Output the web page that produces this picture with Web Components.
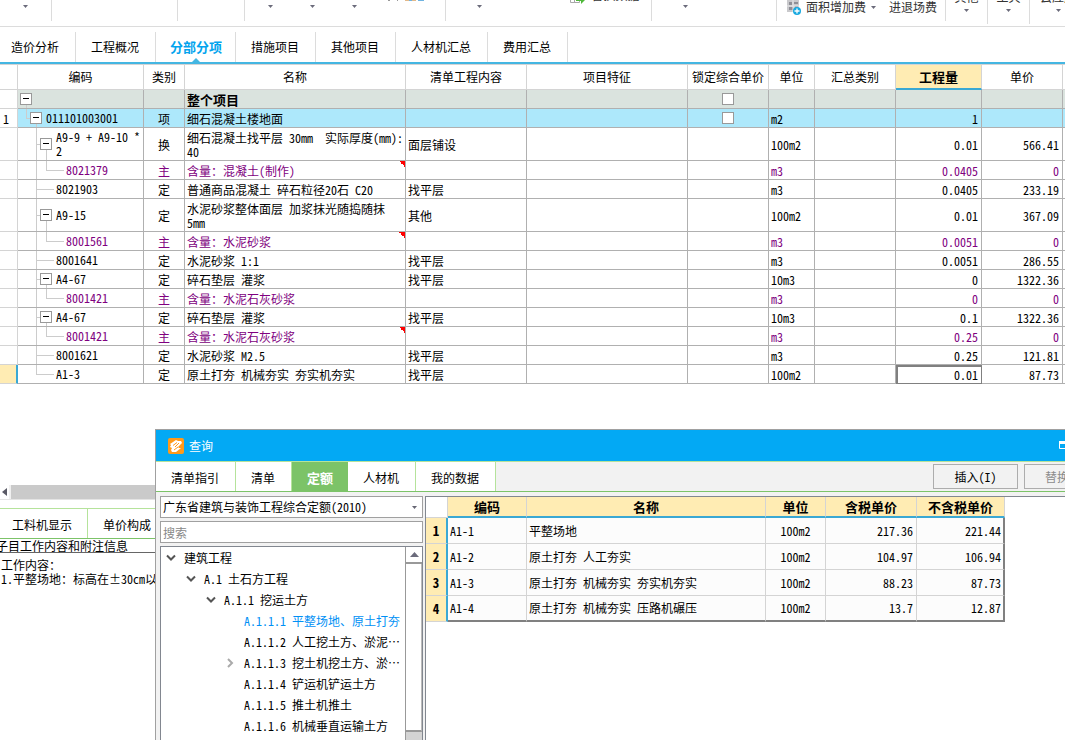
<!DOCTYPE html>
<html lang="zh-CN">
<head>
<meta charset="utf-8">
<title>分部分项 - 查询</title>
<style>
html, body { margin: 0; height: 100%; overflow: hidden; background: #fff; }
body {
  font-family: "Noto Sans CJK SC", "Liberation Sans", sans-serif;
  font-feature-settings: "hwid";
  font-size: 12px; line-height: 14px; color: #000;
  --grid: #b0b0b0; --soft: #d4d4d4; --sky: #44b6e2; --bar: #3aa8d4;
  --sand: #ffecb3; --leaf: #7cc368; --leaf-soft: #b5e39b;
}
</style>
</head>
<body>
<cost-app></cost-app>
<script>
const RESET = `
*, *::before, *::after { box-sizing: border-box; }
button, input, select { font: inherit; font-feature-settings: inherit; color: inherit; margin: 0; padding: 0; border: 0; background: none; border-radius: 0; appearance: none; outline: 0; }
`;
function define(name, html, setup) {
  const tpl = document.createElement('template');
  tpl.innerHTML = html.replace('<style>', '<style>' + RESET);
  customElements.define(name, class extends HTMLElement {
    constructor() {
      super();
      this.attachShadow({ mode: 'open' }).append(tpl.content.cloneNode(true));
    }
    connectedCallback() { if (setup) setup(this, this.shadowRoot); }
  });
}
const CARET = '<svg width="5" height="3" viewBox="0 0 5 3" aria-hidden="true"><path d="M0 0h5L2.5 3z" fill="#6b6b7b"/></svg>';

define('ribbon-group', `<style>
:host { box-sizing: border-box; display: flex; flex: none; width: var(--w); height: 33px; border-right: 1px solid #dcdcdc; justify-content: center; align-items: flex-start; }
:host([tall]) { height: 36px; }
:host([spread]) { justify-content: space-between; }
:host([wide]) { flex: 1 0 auto; border: 0; justify-content: flex-start; }
</style><slot></slot>`);

define('ribbon-item', `<style>
:host { display: block; flex: none; width: var(--iw, 42px); }
button { display: flex; flex-direction: column; align-items: center; justify-content: flex-end; width: 100%; height: 33px; padding-bottom: 13px; gap: 5px; white-space: nowrap; line-height: 14px; }
:host([low]) button { height: 36px; padding-bottom: 12px; gap: 5px; }
:host([row]) button { flex-direction: row; align-items: center; justify-content: center; gap: 5px; padding: 2px 0 0; }
:host([high]) button { flex-direction: row; align-items: flex-start; justify-content: center; padding: 0; }
</style><button type="button" aria-label="功能"><slot></slot><span id="c">${CARET}</span></button>`, (h, r) => {
  if (h.hasAttribute('plain')) r.getElementById('c').remove();
  else r.getElementById('c').style.cssText = 'display:flex;flex:none';
  if (h.textContent.trim()) r.querySelector('button').removeAttribute('aria-label');
});

define('app-ribbon', `<style>
:host { box-sizing: border-box; display: block; height: 27px; overflow: hidden; border-bottom: 1px solid #dcdcdc; color: #333; }
.row { display: flex; align-items: flex-start; margin-top: -12px; }
svg { display: block; flex: none; }
</style>
<div class="row">
<ribbon-group style="--w:52px"><ribbon-item></ribbon-item></ribbon-group>
<ribbon-group style="--w:126px"></ribbon-group>
<ribbon-group style="--w:67px"></ribbon-group>
<ribbon-group style="--w:201px"><ribbon-item></ribbon-item><ribbon-item></ribbon-item><ribbon-item></ribbon-item>
 <ribbon-item plain high style="--iw:66px"><svg width="42" height="14" viewBox="0 0 42 14"><path d="M1 12.500h2M10 12.500h1" stroke="#999"/><path d="M18 12.500h4M25 12.500h4" stroke="#e3b98a"/><path d="M22 12.500h3M31 12.500h6" stroke="#6fb3e0"/></svg></ribbon-item></ribbon-group>
<ribbon-group spread style="--w:206px"><ribbon-item style="--iw:66px"></ribbon-item><ribbon-item plain high style="--iw:92px">
 <svg width="16" height="16" viewBox="0 0 16 16"><path d="M.5.5h9v14h-9zM4.500 1v13M.5 5.500h9M.5 10.500h9" fill="none" stroke="#a8a8a8"/><path d="M6 9h5V6l5 5-5 5v-3H6z" fill="#4fb83a"/></svg>替换数据</ribbon-item></ribbon-group>
<ribbon-group spread style="--w:125px"><ribbon-item style="--iw:66px"></ribbon-item></ribbon-group>
<ribbon-group style="--w:169px"><ribbon-item row low style="--iw:104px">
 <svg width="15" height="16" viewBox="0 0 15 16"><path d="M1 1h12v12H1z" fill="#c9c9cc"/><path d="M3 3h3v3H3zM8 3h4v2H8zM3 8h4v3H3zM9 7h3v5H9z" fill="#8f8f96"/><path d="M1 7h12M7 1v12" stroke="#e6e6e8"/><circle cx="11" cy="12" r="4" fill="#18a9e0"/><path d="M11 9.500v5M8.500 12h5" stroke="#fff" stroke-width="1.300"/></svg>面积增加费</ribbon-item><ribbon-item row low plain style="--iw:60px">进退场费</ribbon-item></ribbon-group>
<ribbon-group tall style="--w:42px"><ribbon-item low>其他</ribbon-item></ribbon-group>
<ribbon-group tall style="--w:42px"><ribbon-item low>工具</ribbon-item></ribbon-group>
<ribbon-group wide><ribbon-item low style="--iw:56px">云应用</ribbon-item></ribbon-group>
</div>`);

define('page-tab', `<style>
:host { display: block; flex: none; }
button { display: block; position: relative; height: 30px; padding: 0 16px 0 15px; border-right: 1px solid #dcdcdc; white-space: nowrap; }
:host([active]) button { font-size: 13px; font-weight: 700; color: #03a4ee; padding: 0 13px 0 14px; }
:host([active]) button::after { content: ""; position: absolute; left: 36px; bottom: 0; border: 4px solid transparent; border-top: 0; border-bottom-color: var(--sky); }
</style><button type="button" role="tab"><slot></slot></button>`);

define('page-tabs', `<style>
:host { display: block; box-sizing: border-box; height: 37px; padding-top: 5px; border-bottom: 2px solid var(--sky); }
div { display: flex; margin-left: -4px; }
</style><div role="tablist"><page-tab>造价分析</page-tab><page-tab>工程概况</page-tab><page-tab active>分部分项</page-tab><page-tab>措施项目</page-tab><page-tab>其他项目</page-tab><page-tab>人材机汇总</page-tab><page-tab>费用汇总</page-tab></div>`);

/* level, code, kind, name, content, unit, quantity, price, flags */
const ROWS = [
  [0, '', '', '整个项目', '', '', '', '', 'root check open'],
  [1, '011101003001', '项', '细石混凝土楼地面', '', 'm2', '1', '', 'item check open'],
  [2, 'A9-9 + A9-10 *\n2', '换', '细石混凝土找平层 30mm  实际厚度(mm):\n40', '面层铺设', '100m2', '0.01', '566.41', 'tall open'],
  [3, '8021379', '主', '含量：混凝土(制作)', '', 'm3', '0.0405', '0', 'main mark'],
  [2, '8021903', '定', '普通商品混凝土 碎石粒径20石 C20', '找平层', 'm3', '0.0405', '233.19', ''],
  [2, 'A9-15', '定', '水泥砂浆整体面层 加浆抹光随捣随抹\n5mm', '其他', '100m2', '0.01', '367.09', 'tall open'],
  [3, '8001561', '主', '含量：水泥砂浆', '', 'm3', '0.0051', '0', 'main mark'],
  [2, '8001641', '定', '水泥砂浆 1:1', '找平层', 'm3', '0.0051', '286.55', ''],
  [2, 'A4-67', '定', '碎石垫层 灌浆', '找平层', '10m3', '0', '1322.36', 'open'],
  [3, '8001421', '主', '含量：水泥石灰砂浆', '', 'm3', '0', '0', 'main'],
  [2, 'A4-67', '定', '碎石垫层 灌浆', '找平层', '10m3', '0.1', '1322.36', 'open'],
  [3, '8001421', '主', '含量：水泥石灰砂浆', '', 'm3', '0.25', '0', 'main mark'],
  [2, '8001621', '定', '水泥砂浆 M2.5', '找平层', 'm3', '0.25', '121.81', ''],
  [2, 'A1-3', '定', '原土打夯 机械夯实 夯实机夯实', '找平层', '100m2', '0.01', '87.73', 'last'],
];
/* connector lines of the tree, painted as backgrounds of the code cell */
function guides(level, flags) {
  const line = (x, y, w, h) => `linear-gradient(#ccc,#ccc) ${x}px ${y}/${w} ${h} no-repeat`;
  const g = [];
  if (level === 0) g.push(line(8, '100%', '1px', '50%'));
  if (level === 1) g.push(line(8, '0', '1px', '50%'), line(8, '50%', '5px', '1px'), line(18, '100%', '1px', '50%'));
  if (level >= 2) g.push(line(18, '0', '1px', flags.includes('last') ? '50%' : '100%'));
  if (level === 2) g.push(line(18, '50%', flags.includes('open') ? '5px' : '18px', '1px'));
  if (level === 2 && flags.includes('open')) g.push(line(28, '100%', '1px', '50%'));
  if (level === 3) g.push(line(28, '0', '1px', '50%'), line(28, '50%', '18px', '1px'));
  return g.join(',') + ', var(--row, transparent)';
}

define('cost-grid', `<style>
:host { display: block; }
table { width: 100%; table-layout: fixed; border-collapse: separate; border-spacing: 0; border-top: 1px solid var(--soft); }
th, td { padding: 0 3px 0 2px; border-right: 1px solid var(--grid); border-bottom: 1px solid var(--grid); text-align: left; font-weight: 400; white-space: pre; overflow: hidden; }
td { height: 19px; padding-top: 1px; background: var(--row, transparent); }
tr.tall td { height: 33px; }
thead th { height: 25px; padding: 0; text-align: center; border-color: var(--soft); }
thead th.on { font-size: 13px; font-weight: 700; background: var(--sand); border-bottom: 2px solid var(--bar); }
tr.root { --row: #dae3de; }
tr.item { --row: #ade8fb; }
td:first-child { border-color: var(--soft); background: #fff; padding-left: 3px; }
td:nth-child(2) { padding: 0; }
td:nth-child(3) { text-align: center; padding-left: 0; padding-right: 0; }
td:nth-child(7) { text-align: center; padding: 0; }
td:nth-child(n+10) { text-align: right; }
td:last-child, th:last-child { border-right: 0; }
tr.root td:nth-child(4) { font-size: 13px; font-weight: 700; }
tr.main { color: #800080; }
tr.mark td:nth-child(4) { background: linear-gradient(45deg, transparent 50%, red 50%) 100% 0 / 6px 6px no-repeat; }
tr.last td:first-child { background: var(--sand); border-right: 2px solid var(--bar); }
tr.last td:nth-child(10) { box-shadow: inset 1px 1px 0 1px #808080; border-color: #808080; }
.code { display: flex; align-items: center; }
.pad { flex: none; }
.box { flex: none; width: 12px; height: 12px; margin-right: 4px; border: 1px solid #999; background: linear-gradient(#000,#000) 2px 4px / 6px 1px no-repeat #fff; }
input { display: block; width: 12px; height: 12px; margin: 0 auto; border: 1px solid #999; background: #fff; }
</style>
<table>
<colgroup></colgroup>
<thead><tr><th></th><th>编码</th><th>类别</th><th>名称</th><th>清单工程内容</th><th>项目特征</th><th>锁定综合单价</th><th>单位</th><th>汇总类别</th><th class="on">工程量</th><th>单价</th><th></th></tr></thead>
<tbody></tbody></table>`, (h, r) => {
  r.querySelector('colgroup').innerHTML = [18, 126, 41, 221, 121, 161, 81, 46, 81, 86, 81].map(w => `<col style="width:${w}px">`).join('') + '<col>';
  r.querySelector('tbody').innerHTML = ROWS.map(([lv, code, kind, name, content, unit, qty, price, f]) => {
    const open = f.includes('open');
    const pad = lv * 10 + (open ? 2 : 18);
    return `<tr class="${f}"><td>${lv === 1 ? '1' : ''}</td>` +
      `<td style="background:${guides(lv, f)}"><div class="code"><span class="pad" style="width:${pad}px"></span>${open ? '<button type="button" class="box" aria-label="折叠"></button>' : ''}<span>${code}</span></div></td>` +
      `<td>${kind}</td><td>${name}</td><td>${content}</td><td></td>` +
      `<td>${f.includes('check') ? '<input type="checkbox" aria-label="锁定综合单价">' : ''}</td>` +
      `<td>${unit}</td><td></td><td>${qty}</td><td>${price}</td><td></td></tr>`;
  }).join('');
});

define('work-notes', `<style>
:host { display: block; overflow: hidden; }
.scroll { display: flex; height: 15px; gap: 2px; background: #f0f0f0; border-bottom: 1px solid #e4e4e4; }
.scroll button { width: 9px; display: grid; place-items: center; background: #fff; }
.scroll i { flex: 1; background: #cacaca; }
nav { display: flex; margin-top: 8px; border-top: 1px solid var(--leaf-soft); border-bottom: 1px solid var(--leaf); }
nav button { flex: none; height: 29px; padding: 2px 16px 0 15px; border-right: 1px solid var(--leaf-soft); }
nav button:first-child { padding-left: 12px; padding-right: 15px; }
h2 { margin: 0 0 0 -4px; height: 14px; font-size: 12px; font-weight: 400; line-height: 14px; white-space: nowrap; border-bottom: 1px solid #666; }
p { margin: 0; padding: 0 1px; white-space: nowrap; }
h2 + p { padding-top: 5px; }
</style>
<div class="scroll"><button type="button" aria-label="向左滚动"><svg width="5" height="8" viewBox="0 0 5 8"><path d="M5 0v8L0 4z" fill="#5a5a66"/></svg></button><i></i></div>
<nav><button type="button">工料机显示</button><button type="button">单价构成</button></nav>
<h2>子目工作内容和附注信息</h2>
<p>工作内容：</p><p>1.平整场地：标高在±30cm以</p>`);

define('quota-tree', `<style>
:host { display: flex; flex: 1; min-height: 0; border: 1px solid #828790; border-bottom: 0; background: #fff; overflow: hidden; }
ul { flex: 1; min-width: 0; margin: 0; padding: 0; list-style: none; overflow: hidden; }
li { display: flex; align-items: center; height: 21px; padding-left: calc(5px + var(--lv) * 20px); white-space: nowrap; }
li.on { color: #0090f5; }
i { flex: none; display: block; width: 18px; }
svg { display: block; }
.bar { flex: none; width: 17px; display: flex; flex-direction: column; background: #d4d4d4; border-left: 1px solid #999; }
.bar button { flex: none; height: 17px; display: grid; place-items: center; background: #fff; border-bottom: 2px solid #999; }
.bar b { flex: none; display: block; height: 168px; background: #fff; border-bottom: 2px solid #999; border-right: 1px solid #bbb; }
</style><ul role="tree"></ul><div class="bar"><button type="button" aria-label="向上滚动"><svg width="9" height="5" viewBox="0 0 9 5"><path d="M0 5h9L4.500 0z" fill="#6b6b7b"/></svg></button><b></b></div>`, (h, r) => {
  const down = '<svg width="10" height="8" viewBox="0 0 10 8"><path d="M1 1.500l4 4 4-4" fill="none" stroke="#555" stroke-width="2"/></svg>';
  const right = '<svg width="8" height="10" viewBox="0 0 8 10"><path d="M2 1l4 4-4 4" fill="none" stroke="#aaa" stroke-width="2"/></svg>';
  r.querySelector('ul').innerHTML = [
    [0, '建筑工程', down], [1, 'A.1 土石方工程', down], [2, 'A.1.1 挖运土方', down],
    [3, 'A.1.1.1 平整场地、原土打夯', '', 'on'], [3, 'A.1.1.2 人工挖土方、淤泥…', ''], [3, 'A.1.1.3 挖土机挖土方、淤…', right],
    [3, 'A.1.1.4 铲运机铲运土方', ''], [3, 'A.1.1.5 推土机推土', ''], [3, 'A.1.1.6 机械垂直运输土方', ''],
  ].map(([lv, t, ic, c]) => `<li role="treeitem" class="${c || ''}" style="--lv:${lv}"><i>${ic}</i>${t}</li>`).join('');
});

define('quota-table', `<style>
:host { display: block; flex: 1; min-width: 0; background: #fff; border: solid #828790; border-width: 1px 0 0 1px; overflow: hidden; }
table { width: 579px; table-layout: fixed; border-collapse: separate; border-spacing: 0; }
th, td { padding: 0 3px 0 2px; border-right: 1px solid var(--soft); border-bottom: 1px solid var(--soft); text-align: left; height: 26px; white-space: nowrap; background: #fcfcfc; }
thead th { height: 21px; padding: 0; font-size: 13px; text-align: center; background: var(--sand); border-bottom: 2px solid var(--bar); }
thead td { height: 21px; background: #fff; }
tbody th { background: var(--sand); border-right: 2px solid var(--bar); padding: 0; text-align: center; font-size: 13px; }
tr td:nth-child(4) { text-align: center; padding: 0; }
tr td:nth-child(n+5) { text-align: right; }
tbody td:last-child { border-right: 2px solid #808080; padding-right: 2px; }
tbody tr:last-child td { border-bottom: 2px solid #808080; }
</style><table><colgroup><col style="width:22px"><col style="width:79px"><col><col style="width:60px"><col style="width:91px"><col style="width:88px"></colgroup>
<thead><tr><td></td><th>编码</th><th>名称</th><th>单位</th><th>含税单价</th><th>不含税单价</th></tr></thead><tbody></tbody></table>`, (h, r) => {
  r.querySelector('tbody').innerHTML = [
    ['A1-1', '平整场地', '217.36', '221.44'], ['A1-2', '原土打夯 人工夯实', '104.97', '106.94'],
    ['A1-3', '原土打夯 机械夯实 夯实机夯实', '88.23', '87.73'], ['A1-4', '原土打夯 机械夯实 压路机碾压', '13.7', '12.87'],
  ].map(([c, n, a, b], i) => `<tr><th>${i + 1}</th><td>${c}</td><td>${n}</td><td>100m2</td><td>${a}</td><td>${b}</td></tr>`).join('');
});

define('query-window', `<style>
:host { display: flex; flex-direction: column; background: #f2f2f2; border: solid #a0a0a0; border-width: 1px 0 0 1px; overflow: hidden; }
header { flex: none; display: flex; align-items: center; height: 31px; padding-left: 12px; gap: 5px; background: #03a9f4; color: #fff; }
header h1 { flex: 1; margin: 0; font-size: 12px; font-weight: 400; }
header button { width: 6px; height: 9px; overflow: hidden; }
svg { display: block; }
.tabs { flex: none; display: flex; height: 31px; border-top: 1px solid var(--leaf-soft); border-bottom: 1px solid var(--leaf); overflow: hidden; }
.tabs .tab { flex: none; background: #fff; padding: 2px 16px 0 15px; border-right: 1px solid var(--leaf-soft); }
.tabs .tab.on { background: var(--leaf); color: #fff; font-size: 13px; font-weight: 700; padding: 2px 14px 0 15px; border-color: var(--leaf); }
.cmds { flex: 1; display: flex; justify-content: flex-end; gap: 6px; padding: 2px 0; min-width: 0; }
.cmds button { flex: none; width: 85px; height: 25px; border: 1px solid #adadad; }
.cmds .cut { width: 41px; border-right: 0; padding-left: 20px; text-align: left; color: #8c8c8c; overflow: hidden; white-space: nowrap; }
main { flex: 1; min-height: 0; display: flex; gap: 2px; padding: 4px 0 0 4px; }
.side { flex: none; width: 263px; display: flex; flex-direction: column; gap: 3px; }
.side select, .side input { flex: none; display: block; width: 100%; height: 22px; padding: 0 2px; border: 1px solid #a0a0a0; background: #fff; }
.side select { background: url("data:image/svg+xml,%3Csvg xmlns='http://www.w3.org/2000/svg' width='5' height='3'%3E%3Cpath d='M0 0h5L2.500 3z' fill='%23666673'/%3E%3C/svg%3E") no-repeat calc(100% - 5px) 9px #fff; }
.side input::placeholder { color: #888; opacity: 1; }
</style>
<header><svg width="16" height="16" viewBox="0 0 16 16"><rect width="16" height="16" rx="2" fill="#ff9a1a"/><path d="M2 6l6-4 2 1 3 0 1 2-4 4 1 1 2 0-5 4-4 0-1-2 1-2-2-1 1-2z" fill="#fff"/><path d="M5 7.500l4-3M7 9l4-4M6 12l4-3" stroke="#ff9a1a" fill="none"/></svg><h1>查询</h1>
<button type="button" aria-label="最大化"><svg width="10" height="9" viewBox="0 0 10 9"><path d="M.5 1.500h9v6h-9z" fill="none" stroke="#fff"/><path d="M0 1.500h10" stroke="#fff" stroke-width="3"/></svg></button></header>
<div class="tabs"><button type="button" class="tab">清单指引</button><button type="button" class="tab">清单</button><button type="button" class="tab on">定额</button><button type="button" class="tab">人材机</button><button type="button" class="tab">我的数据</button>
<div class="cmds"><button type="button">插入(I)</button><button type="button" class="cut" disabled>替换(R)</button></div></div>
<main><div class="side"><select aria-label="定额库"><option>广东省建筑与装饰工程综合定额(2010)</option></select><input type="search" placeholder="搜索" aria-label="搜索"><quota-tree></quota-tree></div><quota-table></quota-table></main>`);

define('cost-app', `<style>
:host { display: grid; grid-template-columns: 155px 1fr; grid-template-rows: auto 45px 56px 1fr; height: 100vh; overflow: hidden; }
.top { grid-column: 1 / -1; min-width: 0; }
work-notes { grid-area: 4 / 1 / 5 / 2; }
query-window { grid-area: 3 / 2 / 5 / 3; min-width: 0; }
</style>
<div class="top"><app-ribbon></app-ribbon><page-tabs></page-tabs><cost-grid></cost-grid></div>
<work-notes></work-notes><query-window></query-window>`);
</script>
</body>
</html>
